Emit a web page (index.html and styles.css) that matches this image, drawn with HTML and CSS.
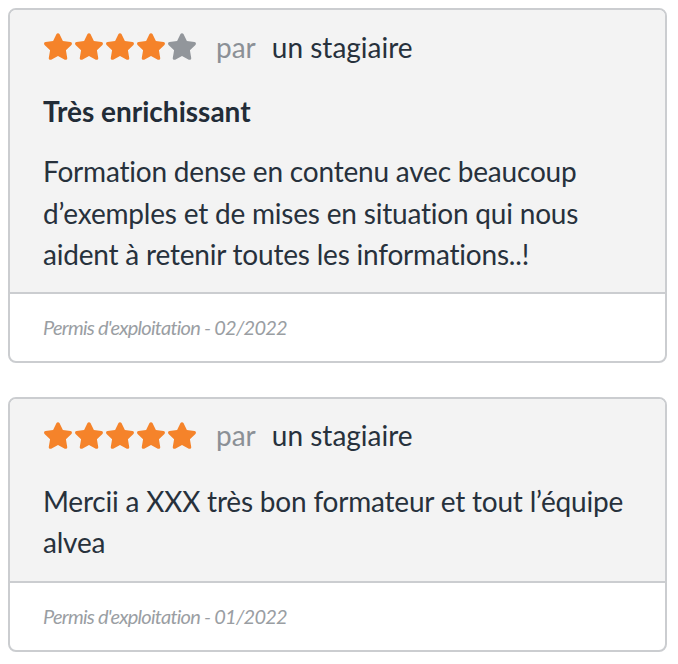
FILE: index.html
```html
<!DOCTYPE html>
<html lang="fr">
<head>
<meta charset="utf-8">
<link rel="stylesheet" href="styles.css">
</head>
<body>
<svg width="0" height="0" class="defs">
  <defs>
    <path id="star" d="M259.3 17.8L194 150.2 47.9 171.5c-26.2 3.8-36.7 36.1-17.7 54.6l105.7 103-25 145.5c-4.5 26.3 23.2 46 46.4 33.7L288 439.6l130.7 68.7c23.2 12.2 50.9-7.4 46.4-33.7l-25-145.5 105.7-103c19-18.5 8.5-50.8-17.7-54.6L382 150.2 316.7 17.8c-11.7-23.6-45.6-23.9-57.4 0z"/>
  </defs>
</svg>
<div class="list">
  <article class="card">
    <div class="card-body">
      <div class="meta">
        <div class="stars">
          <svg class="star on" viewBox="0 0 576 512"><use href="#star"/></svg>
          <svg class="star on" viewBox="0 0 576 512"><use href="#star"/></svg>
          <svg class="star on" viewBox="0 0 576 512"><use href="#star"/></svg>
          <svg class="star on" viewBox="0 0 576 512"><use href="#star"/></svg>
          <svg class="star off" viewBox="0 0 576 512"><use href="#star"/></svg>
        </div>
        <span class="par">par</span>
        <span class="author">un stagiaire</span>
      </div>
      <h3 class="title">Très enrichissant</h3>
      <p class="text">Formation dense en contenu avec beaucoup d’exemples et de mises en situation qui nous aident à retenir toutes les informations..!</p>
    </div>
    <div class="card-foot">Permis d'exploitation - 02/2022</div>
  </article>
  <article class="card">
    <div class="card-body">
      <div class="meta">
        <div class="stars">
          <svg class="star on" viewBox="0 0 576 512"><use href="#star"/></svg>
          <svg class="star on" viewBox="0 0 576 512"><use href="#star"/></svg>
          <svg class="star on" viewBox="0 0 576 512"><use href="#star"/></svg>
          <svg class="star on" viewBox="0 0 576 512"><use href="#star"/></svg>
          <svg class="star on" viewBox="0 0 576 512"><use href="#star"/></svg>
        </div>
        <span class="par">par</span>
        <span class="author">un stagiaire</span>
      </div>
      <p class="text first">Mercii a XXX très bon formateur et tout l’équipe alvea</p>
    </div>
    <div class="card-foot">Permis d'exploitation - 01/2022</div>
  </article>
</div>
</body>
</html>
```
FILE: styles.css
```css
html, body {
  margin: 0;
  padding: 0;
  background: #ffffff;
}
body {
  font-family: Lato, "Open Sans", sans-serif;
  color: #27313c;
  font-variant-ligatures: none;
}
.defs {
  position: absolute;
  width: 0;
  height: 0;
}
.list {
  display: flex;
  flex-direction: column;
  gap: 34px;
  padding: 8px 11px 8px 8px;
}
.card {
  border: 2px solid #cbcdd0;
  border-radius: 8px;
  overflow: hidden;
  background: #fff;
}
.card-body {
  background: #f3f3f3;
  padding: 16px 33px 16px 33px;
  border-bottom: 2px solid #cbcdd0;
}
.meta {
  display: flex;
  align-items: center;
  height: 41px;
  font-size: 28px;
}
.stars {
  display: flex;
  gap: 1px;
  margin-right: 19px;
}
.star {
  width: 30px;
  height: 27px;
  display: block;
}
.star.on { fill: #f5832a; }
.star.off { fill: #92969b; }
.par {
  color: #8b9096;
  margin-right: 16px;
}
.author {
  color: #27313c;
}
.title {
  margin: 24px 0 0;
  font-size: 28px;
  font-weight: 700;
  line-height: 41px;
  color: #222c37;
}
.text {
  margin: 19px 0 0;
  font-size: 28px;
  line-height: 41.5px;
  letter-spacing: -0.2px;
}
.text.first {
  margin-top: 25px;
  margin-bottom: 1px;
}
.card-foot {
  padding: 18px 33px 19px;
  font-size: 20px;
  line-height: 30px;
  font-style: italic;
  letter-spacing: -0.75px;
  color: #9a9ea3;
}
```
